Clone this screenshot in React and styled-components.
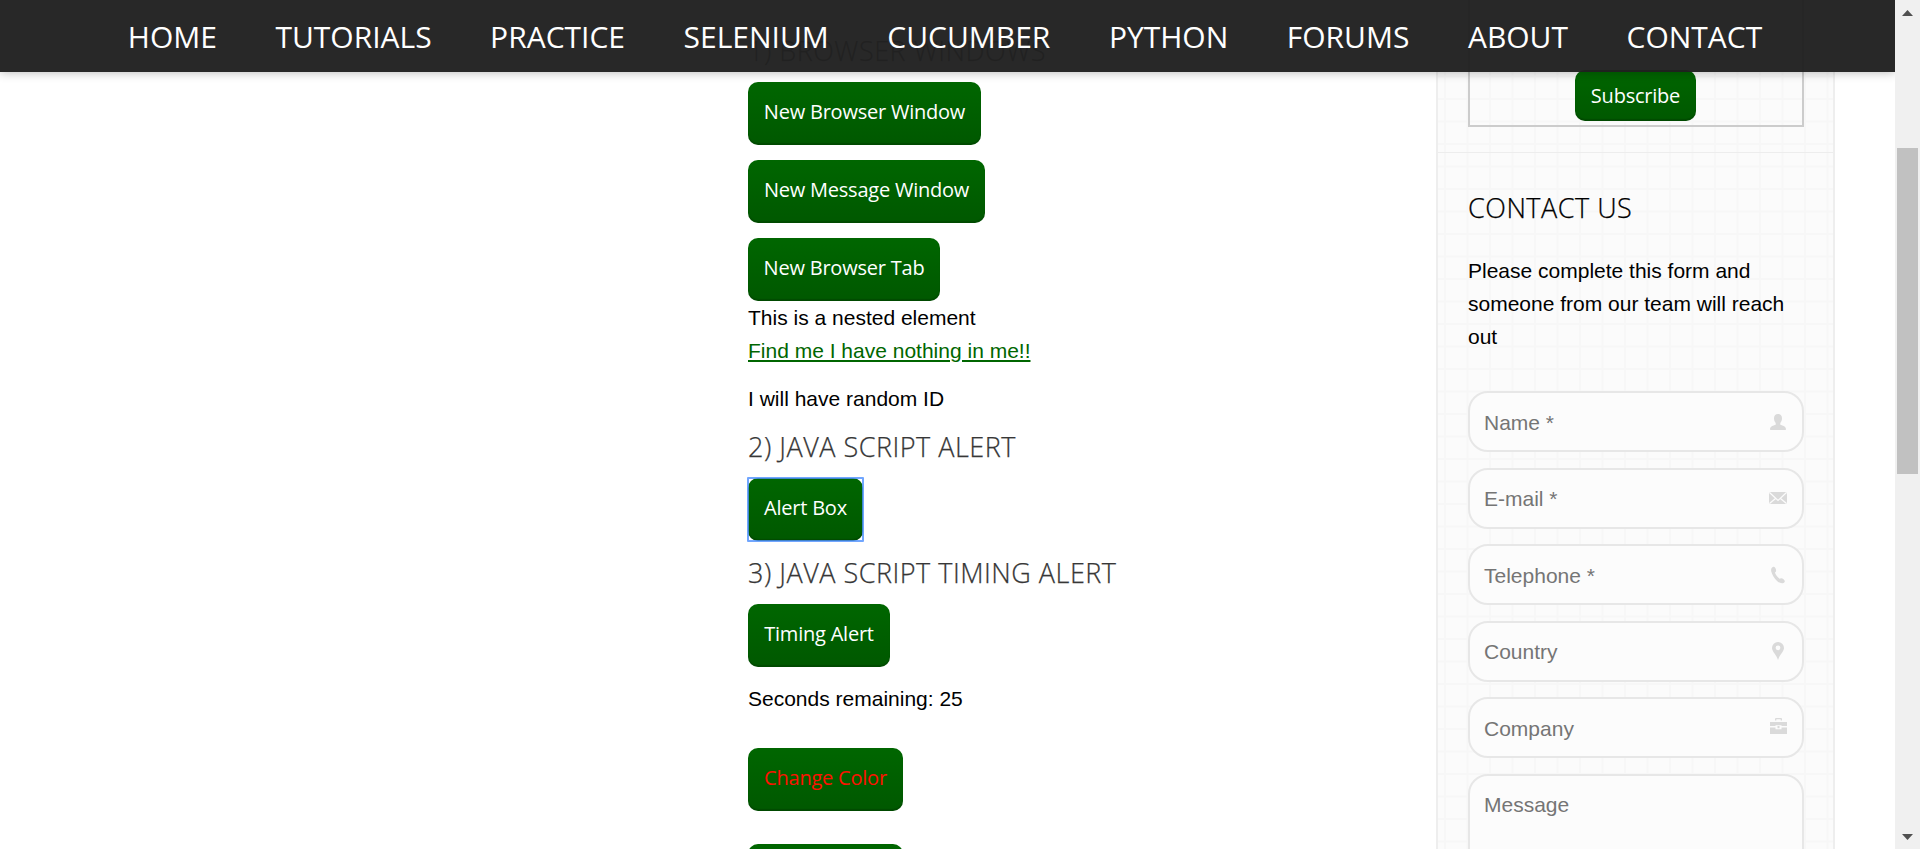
import React from "react";
import styled, { createGlobalStyle, css } from "styled-components";

const GlobalStyle = createGlobalStyle`
  *, *::before, *::after { box-sizing: border-box; }
  body {
    margin: 0;
    background: #fff;
    color: #000;
    font-family: Arial, "Liberation Sans", sans-serif;
    font-size: 21px;
    line-height: 33px;
  }
`;

const Page = styled.div`
  display: flex;
  width: 1920px;
  height: 849px;
  overflow: hidden;
`;

const Viewport = styled.div`
  position: relative;
  display: flex;
  width: 1895px;
  height: 849px;
  padding-left: 748px;
  overflow: hidden;
`;

const NavBar = styled.nav`
  position: absolute;
  inset: 0 0 auto 0;
  z-index: 10;
  display: flex;
  justify-content: center;
  gap: 58.5px;
  height: 72px;
  padding-right: 5px;
  background: rgba(32, 32, 32, 0.965);
  box-shadow: 0 0 10px rgba(0, 0, 0, 0.3);
`;

const NavLink = styled.a`
  color: #fff;
  font: 400 30px/74px "Open Sans", sans-serif;
  white-space: nowrap;
`;

const Main = styled.main`
  display: flex;
  flex-direction: column;
  align-items: flex-start;
  width: 688px;
  padding-top: 32px;
`;

const Heading = styled.h3`
  margin: ${(p) => p.$margin || "0"};
  color: ${(p) => p.$color || "#373737"};
  font: 300 27px/38px "Open Sans", sans-serif;
  letter-spacing: 0.5px;
  -webkit-text-stroke: 0.25px currentColor;
  white-space: nowrap;
`;

const focusRing = css`
  position: relative;

  &::after {
    content: "";
    position: absolute;
    inset: -1px;
    border: 2px solid rgba(77, 144, 254, 0.8);
    border-radius: 1px;
  }
`;

const Button = styled.button`
  flex: none;
  width: ${(p) => p.$width}px;
  height: ${(p) => p.$height || 63}px;
  margin: 0 0 ${(p) => p.$after || 0}px;
  padding: 0 0 ${(p) => (p.$height ? 0 : 3)}px;
  border: 0;
  border-radius: 10px;
  background: linear-gradient(#060, #005800);
  box-shadow: inset 0 -2px 1px rgba(0, 0, 0, 0.16);
  color: ${(p) => p.$color || "#fff"};
  font: 400 20px/30px "Open Sans", sans-serif;
  letter-spacing: -0.22px;
  white-space: nowrap;
  ${(p) => p.$focused && focusRing}
`;

const Text = styled.p`
  margin: ${(p) => p.$margin || "0"};
`;

const Link = styled.a`
  color: #060;
  text-decoration: underline;
  text-decoration-thickness: 2px;
  text-underline-offset: 2px;
`;

const Sidebar = styled.aside`
  width: 399px;
  height: 849px;
  border: solid #eee;
  border-width: 0 2px;
  background-color: #fbfbfb;
  background-image: linear-gradient(90deg, #f7f7f7 2px, transparent 2px),
    linear-gradient(#f7f7f7 2px, transparent 2px);
  background-size: 22.5px 22.5px;
  background-position: 6px 8px;
`;

const SubscribeSection = styled.section`
  height: 153px;
  padding: 0 29px 0 30px;
  border-bottom: 1px solid #ededed;
`;

const SubscribeBox = styled.div`
  display: flex;
  justify-content: center;
  align-items: flex-end;
  height: 127px;
  padding: 0 1px 4px 0;
  border: 2px solid #ccc;
  border-top: 0;
`;

const ContactSection = styled.section`
  padding: 36px 29px 0 30px;
`;

const Form = styled.form`
  display: flex;
  flex-direction: column;
  gap: 15.5px;
  margin-top: 38px;
`;

const Field = styled.label`
  display: flex;
  justify-content: space-between;
  height: ${(p) => (p.$tall ? 150 : 61)}px;
  padding: 12.5px 14px 0 14px;
  border: 2px solid #e7e7e7;
  border-radius: 20px;
  background: #fcfcfc;
  color: #757575;
`;

const FieldIcon = styled.svg`
  width: 20px;
  height: 20px;
  margin-top: 6px;
  fill: #dadada;
`;

const Scrollbar = styled.div`
  display: flex;
  flex-direction: column;
  align-items: center;
  justify-content: space-between;
  width: 25px;
  padding: 10px 0 9px;
  background: #f0f0f0;
`;

const Arrow = styled.svg`
  width: 11px;
  height: 6px;
  fill: #505050;
`;

const Thumb = styled.div`
  width: 21px;
  height: 326px;
  margin: 132px 0 auto;
  background: #c1c1c1;
`;

const links = ["HOME", "TUTORIALS", "PRACTICE", "SELENIUM", "CUCUMBER", "PYTHON", "FORUMS", "ABOUT", "CONTACT"];

const icons = {
  person: <path d="M10 2c2.700 0 4 1.800 4 4.300 0 2-.8 3.700-1.700 4.600v1.900c2.500.8 5.700 1.600 5.700 4.400 0 .5-.2.800-.7.800H2.700c-.5 0-.7-.3-.7-.8 0-2.800 3.200-3.600 5.700-4.400v-1.900C6.800 10 6 8.300 6 6.300 6 3.800 7.300 2 10 2Z" />,
  mail: (
    <>
      <rect x="1" y="4" width="18" height="12" rx="1.500" />
      <path d="m1.500 4.500 8.500 8 8.500-8M1.500 15.500l6-5M18.500 15.500l-6-5" fill="none" stroke="#fcfcfc" strokeWidth="1.200" />
    </>
  ),
  phone: <path d="M5.400 1.700C7.300 1.500 8.900 5.500 7.700 6.900L6.900 7.600c.8 2.400 2.600 4.800 4.900 6.100l1.100-.5c1.500-.4 4.500 2.100 3.800 3.500-1.200 2.500-5 1.700-7.400-.5C6.400 13.400 3.900 9.400 3.200 6.200 2.800 4.200 3.500 2 5.400 1.700Z" />,
  pin: <path fillRule="evenodd" d="M10 1a6 6 0 0 1 6 6c0 3.500-4.300 6.500-6 12C8.300 13.500 4 10.500 4 7a6 6 0 0 1 6-6Zm0 3.400a2.400 2.400 0 1 0 0 4.800 2.400 2.400 0 0 0 0-4.800Z" />,
  case: (
    <path d="M7 2.500V1Q7 0 8 0h5q1 0 1 1v1.500h-1.300V1.300H8.300V2.500ZM2 4h17v4h-5.500V7.200h-6V8H2ZM2 9.500h5.500v1.700h6V9.500H19V16H2ZM9.500 8h2v2.300h-2Z" />
  ),
};

const fields = [
  ["Name *", "person"],
  ["E-mail *", "mail"],
  ["Telephone *", "phone"],
  ["Country", "pin"],
  ["Company", "case"],
];

export default function App() {
  return (
    <Page>
      <GlobalStyle />
      <Viewport>
        <NavBar>
          {links.map((label) => (
            <NavLink key={label}>{label}</NavLink>
          ))}
        </NavBar>
        <Main>
          <Heading $margin="0 0 12px">1) BROWSER WINDOWS</Heading>
          <Button $width={233} $after={15}>New Browser Window</Button>
          <Button $width={237} $after={15}>New Message Window</Button>
          <Button $width={192}>New Browser Tab</Button>
          <Text>This is a nested element</Text>
          <Link>Find me I have nothing in me!!</Link>
          <Text $margin="15px 0 13px">I will have random ID</Text>
          <Heading $margin="0 0 12px">2) JAVA SCRIPT ALERT</Heading>
          <Button $width={115} $after={13} $focused>Alert Box</Button>
          <Heading $margin="0 0 12px">3) JAVA SCRIPT TIMING ALERT</Heading>
          <Button $width={142} $after={15}>Timing Alert</Button>
          <Text $margin="0 0 33px">Seconds remaining: 25</Text>
          <Button $width={155} $color="#ff1000" $after={33}>Change Color</Button>
          <Button $width={155} />
        </Main>
        <Sidebar>
          <SubscribeSection>
            <SubscribeBox>
              <Button $width={121} $height={51}>Subscribe</Button>
            </SubscribeBox>
          </SubscribeSection>
          <ContactSection>
            <Heading $color="#000" $margin="0 0 27px">CONTACT US</Heading>
            <Text>Please complete this form and someone from our team will reach out</Text>
            <Form>
              {fields.map(([label, icon]) => (
                <Field key={label}>
                  {label}
                  <FieldIcon viewBox="0 0 20 20" overflow="visible">{icons[icon]}</FieldIcon>
                </Field>
              ))}
              <Field $tall>Message</Field>
            </Form>
          </ContactSection>
        </Sidebar>
      </Viewport>
      <Scrollbar>
        <Arrow viewBox="0 0 11 6"><path d="M0 6 5.500 0 11 6Z" /></Arrow>
        <Thumb />
        <Arrow viewBox="0 0 11 6"><path d="M0 0h11L5.500 6Z" /></Arrow>
      </Scrollbar>
    </Page>
  );
}
